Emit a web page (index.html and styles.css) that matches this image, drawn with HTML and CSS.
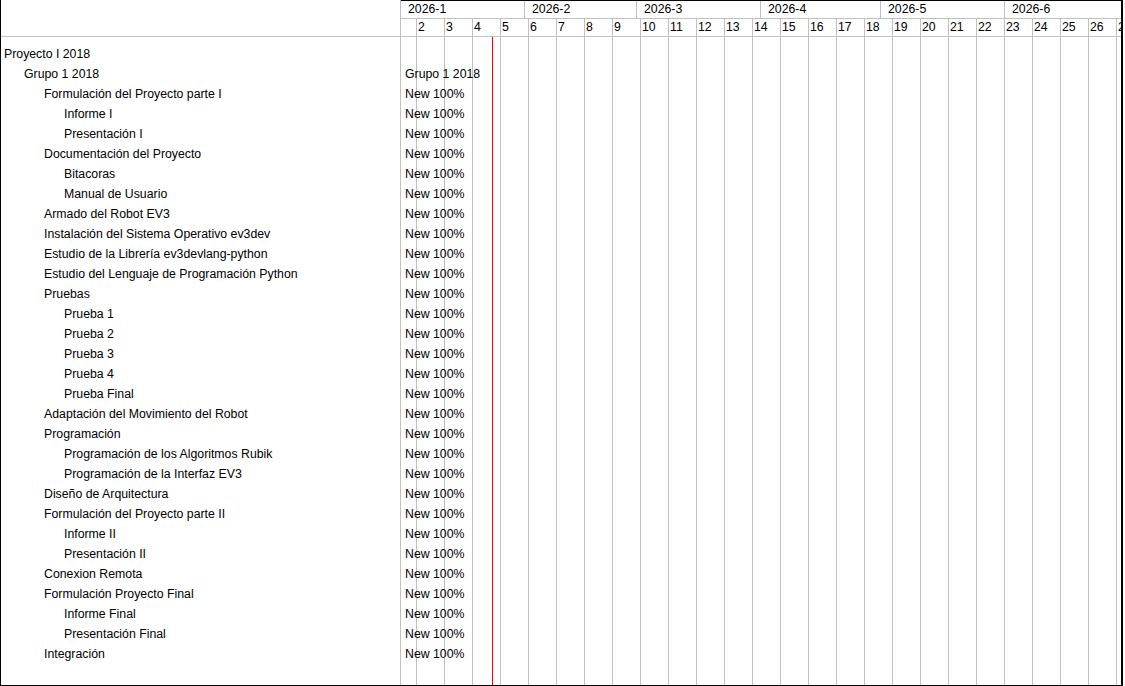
FILE: index.html
```html
<!DOCTYPE html>
<html lang="es">
<head>
  <meta charset="UTF-8">
  <title>Gantt - Proyecto I 2018</title>
  <link rel="stylesheet" href="styles.css">
</head>
<body>

  <div class="gantt">
    <div class="tree">
      <div class="tree-head"></div>
      <div class="tree-body">
        <div class="task lvl-0">Proyecto I 2018</div>
        <div class="task lvl-1">Grupo 1 2018</div>
        <div class="task lvl-2">Formulación del Proyecto parte I</div>
        <div class="task lvl-3">Informe I</div>
        <div class="task lvl-3">Presentación I</div>
        <div class="task lvl-2">Documentación del Proyecto</div>
        <div class="task lvl-3">Bitacoras</div>
        <div class="task lvl-3">Manual de Usuario</div>
        <div class="task lvl-2">Armado del Robot EV3</div>
        <div class="task lvl-2">Instalación del Sistema Operativo ev3dev</div>
        <div class="task lvl-2">Estudio de la Librería ev3devlang-python</div>
        <div class="task lvl-2">Estudio del Lenguaje de Programación Python</div>
        <div class="task lvl-2">Pruebas</div>
        <div class="task lvl-3">Prueba 1</div>
        <div class="task lvl-3">Prueba 2</div>
        <div class="task lvl-3">Prueba 3</div>
        <div class="task lvl-3">Prueba 4</div>
        <div class="task lvl-3">Prueba Final</div>
        <div class="task lvl-2">Adaptación del Movimiento del Robot</div>
        <div class="task lvl-2">Programación</div>
        <div class="task lvl-3">Programación de los Algoritmos Rubik</div>
        <div class="task lvl-3">Programación de la Interfaz EV3</div>
        <div class="task lvl-2">Diseño de Arquitectura</div>
        <div class="task lvl-2">Formulación del Proyecto parte II</div>
        <div class="task lvl-3">Informe II</div>
        <div class="task lvl-3">Presentación II</div>
        <div class="task lvl-2">Conexion Remota</div>
        <div class="task lvl-2">Formulación Proyecto Final</div>
        <div class="task lvl-3">Informe Final</div>
        <div class="task lvl-3">Presentación Final</div>
        <div class="task lvl-2">Integración</div>
      </div>
    </div>

    <div class="timeline">
      <div class="months">
        <div class="month m31">2026-1</div>
        <div class="month m28">2026-2</div>
        <div class="month m31">2026-3</div>
        <div class="month m30">2026-4</div>
        <div class="month m31">2026-5</div>
        <div class="month m30">2026-6</div>
      </div>
      <div class="weeks">
        <div class="week first"></div>
        <div class="week">2</div>
        <div class="week">3</div>
        <div class="week">4</div>
        <div class="week">5</div>
        <div class="week">6</div>
        <div class="week">7</div>
        <div class="week">8</div>
        <div class="week">9</div>
        <div class="week">10</div>
        <div class="week">11</div>
        <div class="week">12</div>
        <div class="week">13</div>
        <div class="week">14</div>
        <div class="week">15</div>
        <div class="week">16</div>
        <div class="week">17</div>
        <div class="week">18</div>
        <div class="week">19</div>
        <div class="week">20</div>
        <div class="week">21</div>
        <div class="week">22</div>
        <div class="week">23</div>
        <div class="week">24</div>
        <div class="week">25</div>
        <div class="week">26</div>
        <div class="week">27</div>
      </div>
      <div class="grid">
        <div class="today"></div>
        <div class="bar"></div>
        <div class="bar">Grupo 1 2018</div>
        <div class="bar">New 100%</div>
        <div class="bar">New 100%</div>
        <div class="bar">New 100%</div>
        <div class="bar">New 100%</div>
        <div class="bar">New 100%</div>
        <div class="bar">New 100%</div>
        <div class="bar">New 100%</div>
        <div class="bar">New 100%</div>
        <div class="bar">New 100%</div>
        <div class="bar">New 100%</div>
        <div class="bar">New 100%</div>
        <div class="bar">New 100%</div>
        <div class="bar">New 100%</div>
        <div class="bar">New 100%</div>
        <div class="bar">New 100%</div>
        <div class="bar">New 100%</div>
        <div class="bar">New 100%</div>
        <div class="bar">New 100%</div>
        <div class="bar">New 100%</div>
        <div class="bar">New 100%</div>
        <div class="bar">New 100%</div>
        <div class="bar">New 100%</div>
        <div class="bar">New 100%</div>
        <div class="bar">New 100%</div>
        <div class="bar">New 100%</div>
        <div class="bar">New 100%</div>
        <div class="bar">New 100%</div>
        <div class="bar">New 100%</div>
        <div class="bar">New 100%</div>
      </div>
    </div>
  </div>

</body>
</html>
```

FILE: styles.css
```css
body {
  margin: 0;
  font-family: 'Liberation Sans', Arial, sans-serif;
  font-size: 12.3px;
  color: #000;
  background: #fff;
}

.gantt {
  display: flex;
  width: 1123px;
  height: 686px;
  box-sizing: border-box;
  border-bottom: 1px solid #000;
  overflow: hidden;
}

/* left task tree */
.tree {
  flex: 0 0 401px;
  box-sizing: border-box;
  border-left: 1px solid #000;
  border-right: 1px solid #c0c0c0;
}

.tree-head {
  height: 37px;
  box-sizing: border-box;
  border-bottom: 1px solid #c0c0c0;
}

.tree-body {
  padding-top: 7px;
}

.task {
  height: 20px;
  line-height: 20px;
  white-space: nowrap;
}

.lvl-0 { padding-left: 3px; }
.lvl-1 { padding-left: 23px; }
.lvl-2 { padding-left: 43px; }
.lvl-3 { padding-left: 63px; }

/* timeline */
.timeline {
  flex: 1;
  min-width: 0;
  display: flex;
  flex-direction: column;
  border-top: 1px solid #000;
  border-right: 2px solid #000;
  overflow: hidden;
}

.months,
.weeks {
  display: flex;
  height: 18px;
  box-sizing: border-box;
  border-bottom: 1px solid #c0c0c0;
  white-space: nowrap;
}

.month {
  flex: none;
  box-sizing: border-box;
  padding-left: 7px;
  line-height: 17px;
  border-right: 1px solid #c0c0c0;
}

.m28 { width: 112px; }
.m30 { width: 120px; }
.m31 { width: 124px; }

.week {
  flex: none;
  width: 28px;
  box-sizing: border-box;
  padding-left: 1px;
  line-height: 17px;
  border-right: 1px solid #c0c0c0;
}

.week.first {
  width: 16px;
}

.grid {
  flex: 1;
  position: relative;
  padding-top: 7px;
  background-image: linear-gradient(90deg, #c0c0c0 0 1px, transparent 1px);
  background-size: 28px 100%;
  background-position: 15px 0;
  background-repeat: repeat-x;
}

.today {
  position: absolute;
  top: 0;
  bottom: 0;
  left: 91px;
  width: 1px;
  background: #f00;
}

.bar {
  height: 20px;
  line-height: 20px;
  padding-left: 4px;
  white-space: nowrap;
}
```
